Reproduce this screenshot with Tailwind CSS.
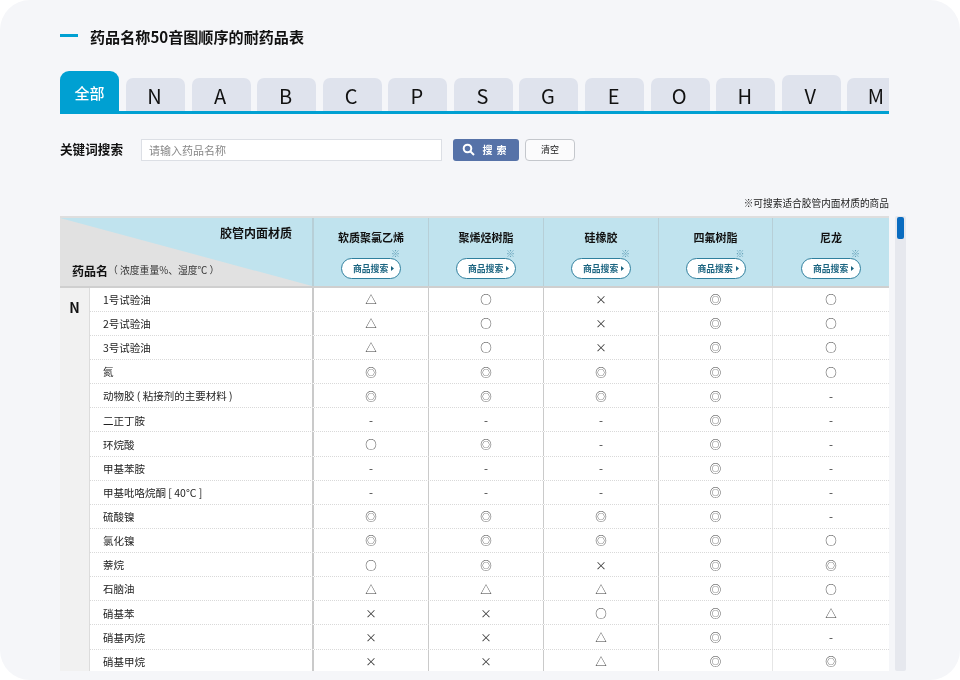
<!DOCTYPE html>
<html lang="zh">
<head>
<meta charset="utf-8">
<script src="https://cdn.jsdelivr.net/npm/@tailwindcss/browser@4"></script>
</head>
<body class="w-[960px] h-[680px] overflow-hidden bg-white font-['Noto_Sans_CJK_SC','Noto_Sans',sans-serif] text-[#222]">
<main class="w-[960px] h-[680px] rounded-[30px] bg-[#f5f6f9] pl-[60px] overflow-hidden will-change-transform">
  <header class="flex items-center h-[72px]">
    <span class="w-[18px] h-[3px] bg-[#00a0d2] mr-[12px] -mt-[1px]"></span>
    <h1 class="text-[15.1px] leading-none font-bold text-[#111] mt-[2px]">药品名称50音图顺序的耐药品表</h1>
  </header>

  <nav class="w-[829px] h-[43px] -mt-[1px] overflow-hidden border-b-[3px] border-[#00a0d2] flex items-end gap-[6.58px]">
    <a class="w-[59px] mr-[0.4px] h-[40px] shrink-0 rounded-t-[9px] bg-[#00a0d2] text-white text-[15px] font-medium flex items-center justify-center pt-[5px]">全部</a>
    <a class="w-[59px] h-[33px] shrink-0 rounded-t-[7px] bg-[#dfe3ed] text-[#111] text-[20px] flex items-center justify-center pt-[3px] pr-[2px]">N</a>
    <a class="w-[59px] h-[33px] shrink-0 rounded-t-[7px] bg-[#dfe3ed] text-[#111] text-[20px] flex items-center justify-center pt-[3px] pr-[2px]">A</a>
    <a class="w-[59px] h-[33px] shrink-0 rounded-t-[7px] bg-[#dfe3ed] text-[#111] text-[20px] flex items-center justify-center pt-[3px] pr-[2px]">B</a>
    <a class="w-[59px] h-[33px] shrink-0 rounded-t-[7px] bg-[#dfe3ed] text-[#111] text-[20px] flex items-center justify-center pt-[3px] pr-[2px]">C</a>
    <a class="w-[59px] h-[33px] shrink-0 rounded-t-[7px] bg-[#dfe3ed] text-[#111] text-[20px] flex items-center justify-center pt-[3px] pr-[2px]">P</a>
    <a class="w-[59px] h-[33px] shrink-0 rounded-t-[7px] bg-[#dfe3ed] text-[#111] text-[20px] flex items-center justify-center pt-[3px] pr-[2px]">S</a>
    <a class="w-[59px] h-[33px] shrink-0 rounded-t-[7px] bg-[#dfe3ed] text-[#111] text-[20px] flex items-center justify-center pt-[3px] pr-[2px]">G</a>
    <a class="w-[59px] h-[33px] shrink-0 rounded-t-[7px] bg-[#dfe3ed] text-[#111] text-[20px] flex items-center justify-center pt-[3px] pr-[2px]">E</a>
    <a class="w-[59px] h-[33px] shrink-0 rounded-t-[7px] bg-[#dfe3ed] text-[#111] text-[20px] flex items-center justify-center pt-[3px] pr-[2px]">O</a>
    <a class="w-[59px] h-[33px] shrink-0 rounded-t-[7px] bg-[#dfe3ed] text-[#111] text-[20px] flex items-center justify-center pt-[3px] pr-[2px]">H</a>
    <a class="w-[59px] h-[36px] shrink-0 rounded-t-[7px] bg-[#dfe3ed] text-[#111] text-[20px] flex items-center justify-center pt-[5px] pr-[2px]">V</a>
    <a class="w-[59px] h-[33px] shrink-0 rounded-t-[7px] bg-[#dfe3ed] text-[#111] text-[20px] flex items-center justify-center pt-[3px] pr-[2px]">M</a>
  </nav>

  <form class="flex items-center h-[23px] mt-[24px]">
    <label class="w-[81px] text-[12.6px] font-bold text-[#111] leading-none">关键词搜索</label>
    <input class="w-[301px] h-[22px] bg-white border border-[#dcdfe5] px-[7px] text-[11px] text-[#333] placeholder:text-[#888] outline-none" placeholder="请输入药品名称">
    <button type="button" class="ml-[11px] w-[66px] h-[22px] rounded-[3px] bg-[#5672a8] text-white text-[10px] font-bold flex items-center justify-center gap-[8px] tracking-[4px]">
      <svg class="w-[13px] h-[13px]" viewBox="0 0 13 13" fill="none" stroke="white" stroke-width="2"><circle cx="5.5" cy="5.5" r="3.8"/><path d="M8.5 8.5l3.5 3.5"/></svg>
      <span>搜索</span>
    </button>
    <button type="button" class="ml-[6px] w-[50px] h-[22px] rounded-[4px] bg-[#fbfbfc] border border-[#c4c7cc] text-[#222] text-[9px] flex items-center justify-center">清空</button>
  </form>

  <p class="w-[829px] text-right text-[9.7px] leading-none text-[#222] mt-[38px]">※可搜索适合胶管内面材质的商品</p>

  <section class="flex mt-[7px] h-[456px] items-stretch">
    <div class="w-[829px] h-[455px] overflow-hidden bg-white text-[#333]">
      <div class="relative h-[72px] bg-[#c0e3ee] border-t-[2px] border-[#dedede] border-b-[2px] border-b-[#cfcfcf] grid grid-cols-[252px_116px_115px_115px_114px_117px]">
        <div class="relative overflow-hidden">
          <svg class="absolute inset-0 w-full h-full" viewBox="0 0 252 68" preserveAspectRatio="none"><polygon points="0,0 252,68 0,68" fill="#e1e1e1"/></svg>
          <span class="absolute right-[20px] top-[9px] text-[12px] leading-none font-bold text-[#111]">胶管内面材质</span>
          <span class="absolute left-[12px] top-[46px] h-[14px] flex items-center leading-none text-[#111] whitespace-nowrap"><b class="text-[12px] font-bold">药品名</b><span class="text-[9.8px] text-[#333]"> （ 浓度重量%、湿度℃ ）</span></span>
        </div>
        <div class="relative border-l-2 border-[#b7cfd7] flex flex-col items-center pt-[14px]">
          <b class="text-[11px] leading-none font-bold text-[#111]">软质聚氯乙烯</b>
          <a class="relative mt-[15px] w-[60px] h-[21px] rounded-full bg-white border-[1.5px] border-[#2f7f9d] text-[#1b6480] text-[8.8px] font-bold flex items-center pl-[11px]">商品搜索<svg class="ml-[3px] w-[3px] h-[5px]" viewBox="0 0 3 5"><path d="M0 0l3 2.5L0 5z" fill="#1b6480"/></svg><span class="absolute -top-[10px] right-[0px] text-[9px] leading-none text-[#5a9ab3]">※</span></a>
        </div>
        <div class="relative border-l border-[#b7cfd7] flex flex-col items-center pt-[14px]">
          <b class="text-[11px] leading-none font-bold text-[#111]">聚烯烃树脂</b>
          <a class="relative mt-[15px] w-[60px] h-[21px] rounded-full bg-white border-[1.5px] border-[#2f7f9d] text-[#1b6480] text-[8.8px] font-bold flex items-center pl-[11px]">商品搜索<svg class="ml-[3px] w-[3px] h-[5px]" viewBox="0 0 3 5"><path d="M0 0l3 2.5L0 5z" fill="#1b6480"/></svg><span class="absolute -top-[10px] right-[0px] text-[9px] leading-none text-[#5a9ab3]">※</span></a>
        </div>
        <div class="relative border-l border-[#b7cfd7] flex flex-col items-center pt-[14px]">
          <b class="text-[11px] leading-none font-bold text-[#111]">硅橡胶</b>
          <a class="relative mt-[15px] w-[60px] h-[21px] rounded-full bg-white border-[1.5px] border-[#2f7f9d] text-[#1b6480] text-[8.8px] font-bold flex items-center pl-[11px]">商品搜索<svg class="ml-[3px] w-[3px] h-[5px]" viewBox="0 0 3 5"><path d="M0 0l3 2.5L0 5z" fill="#1b6480"/></svg><span class="absolute -top-[10px] right-[0px] text-[9px] leading-none text-[#5a9ab3]">※</span></a>
        </div>
        <div class="relative border-l border-[#b7cfd7] flex flex-col items-center pt-[14px]">
          <b class="text-[11px] leading-none font-bold text-[#111]">四氟树脂</b>
          <a class="relative mt-[15px] w-[60px] h-[21px] rounded-full bg-white border-[1.5px] border-[#2f7f9d] text-[#1b6480] text-[8.8px] font-bold flex items-center pl-[11px]">商品搜索<svg class="ml-[3px] w-[3px] h-[5px]" viewBox="0 0 3 5"><path d="M0 0l3 2.5L0 5z" fill="#1b6480"/></svg><span class="absolute -top-[10px] right-[0px] text-[9px] leading-none text-[#5a9ab3]">※</span></a>
        </div>
        <div class="relative border-l border-[#b7cfd7] flex flex-col items-center pt-[14px]">
          <b class="text-[11px] leading-none font-bold text-[#111]">尼龙</b>
          <a class="relative mt-[15px] w-[60px] h-[21px] rounded-full bg-white border-[1.5px] border-[#2f7f9d] text-[#1b6480] text-[8.8px] font-bold flex items-center pl-[11px]">商品搜索<svg class="ml-[3px] w-[3px] h-[5px]" viewBox="0 0 3 5"><path d="M0 0l3 2.5L0 5z" fill="#1b6480"/></svg><span class="absolute -top-[10px] right-[0px] text-[9px] leading-none text-[#5a9ab3]">※</span></a>
        </div>
      </div>

      <div class="flex">
        <div class="w-[30px] shrink-0 h-[400px] bg-[#f1f1f1] border-r border-[#dcdcdc] text-center text-[14px] font-bold text-[#111] pt-[12px] leading-none">N</div>
        <div class="w-[799px] text-[10.5px] [&>div]:grid [&>div]:grid-cols-[222px_116px_115px_115px_114px_117px] [&>div]:h-[24.13px] [&>div]:items-stretch [&>div]:border-b [&>div]:border-dotted [&>div]:border-[#d9d9d9] [&>div>span]:flex [&>div>span]:items-center [&>div>span]:justify-center [&>div>span]:pt-[1px] [&>div>span]:text-[11.5px] [&>div>span]:text-[#3a3a3a] [&>div>span]:border-l [&>div>span]:border-[#cacaca] [&>div>span:nth-child(2)]:border-l-2 [&>div>span:last-child]:border-[#e6e6e6] [&>div>em]:not-italic [&>div>em]:pl-[13px] [&>div>em]:pt-[1px] [&>div>em]:flex [&>div>em]:items-center [&>div>em]:text-[#222]">
          <div><em>1号试验油</em><span>△</span><span>○</span><span>×</span><span>◎</span><span>○</span></div>
          <div><em>2号试验油</em><span>△</span><span>○</span><span>×</span><span>◎</span><span>○</span></div>
          <div><em>3号试验油</em><span>△</span><span>○</span><span>×</span><span>◎</span><span>○</span></div>
          <div><em>氮</em><span>◎</span><span>◎</span><span>◎</span><span>◎</span><span>○</span></div>
          <div><em>动物胶 ( 粘接剂的主要材料 )</em><span>◎</span><span>◎</span><span>◎</span><span>◎</span><span>-</span></div>
          <div><em>二正丁胺</em><span>-</span><span>-</span><span>-</span><span>◎</span><span>-</span></div>
          <div><em>环烷酸</em><span>○</span><span>◎</span><span>-</span><span>◎</span><span>-</span></div>
          <div><em>甲基苯胺</em><span>-</span><span>-</span><span>-</span><span>◎</span><span>-</span></div>
          <div><em>甲基吡咯烷酮 [ 40°C ]</em><span>-</span><span>-</span><span>-</span><span>◎</span><span>-</span></div>
          <div><em>硫酸镍</em><span>◎</span><span>◎</span><span>◎</span><span>◎</span><span>-</span></div>
          <div><em>氯化镍</em><span>◎</span><span>◎</span><span>◎</span><span>◎</span><span>○</span></div>
          <div><em>萘烷</em><span>○</span><span>◎</span><span>×</span><span>◎</span><span>◎</span></div>
          <div><em>石脑油</em><span>△</span><span>△</span><span>△</span><span>◎</span><span>○</span></div>
          <div><em>硝基苯</em><span>×</span><span>×</span><span>○</span><span>◎</span><span>△</span></div>
          <div><em>硝基丙烷</em><span>×</span><span>×</span><span>△</span><span>◎</span><span>-</span></div>
          <div><em>硝基甲烷</em><span>×</span><span>×</span><span>△</span><span>◎</span><span>◎</span></div>
        </div>
      </div>
    </div>
    <div class="ml-[6px] w-[11px] h-[455px] rounded-[2px] bg-[#e6e8ee] px-[2px] py-[1px]">
      <div class="h-[22px] rounded-[2px] bg-[#0a6cc0]"></div>
    </div>
  </section>
</main>
</body>
</html>
